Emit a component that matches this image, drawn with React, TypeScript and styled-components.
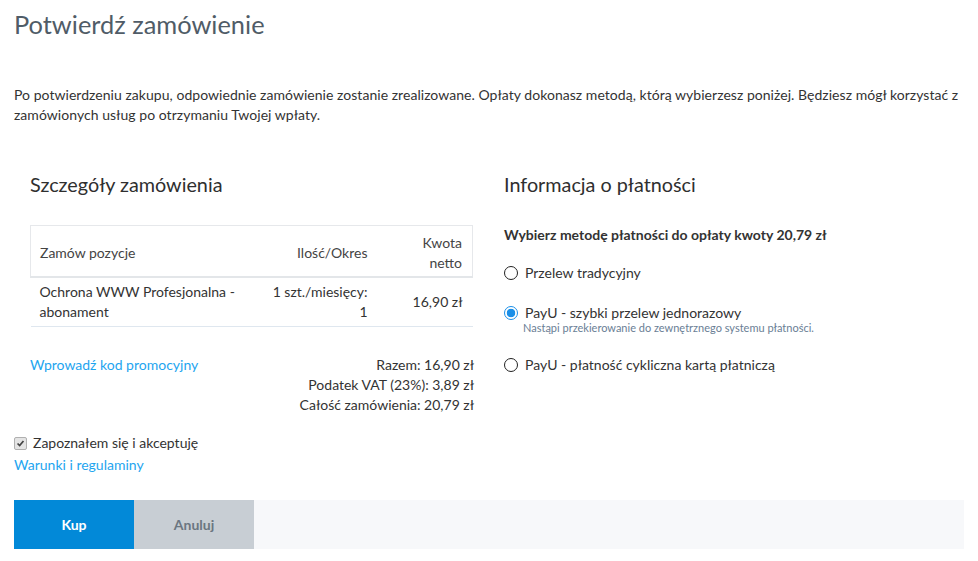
import React from "react";
import styled, { createGlobalStyle } from "styled-components";

const Global = createGlobalStyle`
  html, body { margin: 0; padding: 0; background: #fff; }
  body { font-family: Lato, "Open Sans", sans-serif; color: #333; font-size: 14px; }
  * { box-sizing: border-box; }
`;

const Page = styled.div`
  width: 950px;
  margin: 0 14px;
`;

const Title = styled.h1`
  margin: 9px 0 0;
  font-size: 25.4px;
  line-height: 30px;
  font-weight: 400;
  color: #505c67;
`;

const Intro = styled.p`
  margin: 46px 0 0;
  font-size: 14px;
  line-height: 20px;
  letter-spacing: 0.04px;
  color: #333;
`;

const Columns = styled.div`
  display: grid;
  grid-template-columns: 475px 475px;
  margin-top: 47px;
`;

const Column = styled.section<{ $pad: number }>`
  padding-left: ${(p) => p.$pad}px;
  padding-right: 16px;
`;

const SectionTitle = styled.h2`
  margin: 0;
  font-size: 19.8px;
  line-height: 24px;
  font-weight: 400;
  color: #2f2f2f;
`;

const Table = styled.table`
  width: 100%;
  margin-top: 29px;
  border-collapse: collapse;
`;

const HeadCell = styled.th<{ $align?: string; $w?: number }>`
  text-align: ${(p) => p.$align || "left"};
  width: ${(p) => (p.$w ? p.$w + "px" : "auto")};
  font-weight: 400;
  font-size: 14px;
  line-height: 20px;
  color: #444;
  padding: 7px 10px 3px;
  vertical-align: middle;
  border-top: 1px solid #e6e8eb;
  border-bottom: 2px solid #e3e6e9;
  &:first-child { border-left: 1px solid #e6e8eb; padding-left: 9px; }
  &:last-child { border-right: 1px solid #e6e8eb; }
`;

const Cell = styled.td<{ $align?: string }>`
  text-align: ${(p) => p.$align || "left"};
  font-size: 14px;
  line-height: 20px;
  color: #333;
  padding: 4px 10px 4px;
  vertical-align: middle;
  border-bottom: 1px solid #dfe7ef;
  &:first-child { padding-left: 9px; }
`;

const SummaryRow = styled.div`
  display: flex;
  justify-content: space-between;
  align-items: flex-start;
  margin-top: 28px;
`;

const Link = styled.a`
  color: #1ea5ef;
  text-decoration: none;
  font-size: 14px;
  line-height: 20px;
  cursor: pointer;
`;

const Totals = styled.div`
  text-align: right;
  font-size: 14px;
  line-height: 20px;
  color: #333;
  margin-right: -1px;
`;

const Accept = styled.div`
  margin-top: 18px;
  display: flex;
  flex-direction: column;
`;

const CheckLabel = styled.label`
  display: flex;
  align-items: center;
  gap: 6px;
  font-size: 14px;
  line-height: 20px;
  color: #333;
`;

const Check = styled.input`
  appearance: none;
  margin: 0;
  width: 13px;
  height: 13px;
  border: 1px solid #b0b0b0;
  border-radius: 2px;
  background: #e4e4e4 url("data:image/svg+xml;utf8,<svg xmlns='http://www.w3.org/2000/svg' viewBox='0 0 13 13'><path d='M3 6.5 L5.5 9 L10 3.5' fill='none' stroke='%23444' stroke-width='2'/></svg>") center/11px no-repeat;
`;

const TermsLink = styled(Link)`
  line-height: 22px;
  margin-top: 1px;
`;

const Footer = styled.div`
  margin-top: 24px;
  display: flex;
  height: 49px;
  background: #f7f8fa;
`;

const Button = styled.button<{ $primary?: boolean }>`
  width: 120px;
  height: 100%;
  border: none;
  font-family: inherit;
  font-size: 14px;
  font-weight: 700;
  background: ${(p) => (p.$primary ? "#0289d8" : "#c8ced4")};
  color: ${(p) => (p.$primary ? "#fff" : "#6b7681")};
  cursor: pointer;
`;

const Prompt = styled.div`
  margin-top: 29px;
  font-size: 14px;
  line-height: 20px;
  font-weight: 700;
  color: #333;
`;

const Options = styled.div`
  display: flex;
  flex-direction: column;
  gap: 20px;
  margin-top: 18px;
`;

const Option = styled.label`
  display: flex;
  align-items: flex-start;
  gap: 7px;
  cursor: pointer;
`;

const Radio = styled.input`
  appearance: none;
  margin: 3px 0 0;
  width: 14px;
  height: 14px;
  border-radius: 50%;
  border: 1px solid #222;
  background: #fff;
  flex-shrink: 0;
  &:checked {
    border-color: #1a8fe8;
    background: radial-gradient(circle, #1a8fe8 0 4px, #fff 4.6px);
  }
`;

const OptionText = styled.div`
  display: flex;
  flex-direction: column;
`;

const OptionLabel = styled.span`
  font-size: 14px;
  line-height: 20px;
  color: #333;
`;

const OptionHint = styled.span`
  font-size: 11px;
  line-height: 14px;
  color: #6a7e95;
  margin-top: -2px;
  margin-left: -2px;
`;

const options = [
  { id: "tr", label: "Przelew tradycyjny" },
  {
    id: "payu",
    label: "PayU - szybki przelew jednorazowy",
    hint: "Nastąpi przekierowanie do zewnętrznego systemu płatności.",
  },
  { id: "card", label: "PayU - płatność cykliczna kartą płatniczą" },
];

export default function App() {
  return (
    <Page>
      <Global />
      <Title>Potwierdź zamówienie</Title>
      <Intro>
        Po potwierdzeniu zakupu, odpowiednie zamówienie zostanie zrealizowane. Opłaty dokonasz metodą, którą
        wybierzesz poniżej. Będziesz mógł korzystać z zamówionych usług po otrzymaniu Twojej wpłaty.
      </Intro>
      <Columns>
        <Column $pad={16}>
          <SectionTitle>Szczegóły zamówienia</SectionTitle>
          <Table>
            <thead>
              <tr>
                <HeadCell>Zamów pozycje</HeadCell>
                <HeadCell $align="right" $w={120}>Ilość/Okres</HeadCell>
                <HeadCell $align="right" $w={95}>Kwota netto</HeadCell>
              </tr>
            </thead>
            <tbody>
              <tr>
                <Cell>Ochrona WWW Profesjonalna - abonament</Cell>
                <Cell $align="right">1 szt./miesięcy: 1</Cell>
                <Cell $align="right">16,90 zł</Cell>
              </tr>
            </tbody>
          </Table>
          <SummaryRow>
            <Link>Wprowadź kod promocyjny</Link>
            <Totals>
              <div>Razem: 16,90 zł</div>
              <div>Podatek VAT (23%): 3,89 zł</div>
              <div>Całość zamówienia: 20,79 zł</div>
            </Totals>
          </SummaryRow>
        </Column>
        <Column $pad={15}>
          <SectionTitle>Informacja o płatności</SectionTitle>
          <Prompt>Wybierz metodę płatności do opłaty kwoty 20,79 zł</Prompt>
          <Options>
            {options.map((o) => (
              <Option key={o.id}>
                <Radio type="radio" name="pay" defaultChecked={o.id === "payu"} />
                <OptionText>
                  <OptionLabel>{o.label}</OptionLabel>
                  {o.hint && <OptionHint>{o.hint}</OptionHint>}
                </OptionText>
              </Option>
            ))}
          </Options>
        </Column>
      </Columns>
      <Accept>
        <CheckLabel>
          <Check type="checkbox" defaultChecked />
          Zapoznałem się i akceptuję
        </CheckLabel>
        <TermsLink>Warunki i regulaminy</TermsLink>
      </Accept>
      <Footer>
        <Button $primary>Kup</Button>
        <Button>Anuluj</Button>
      </Footer>
    </Page>
  );
}
